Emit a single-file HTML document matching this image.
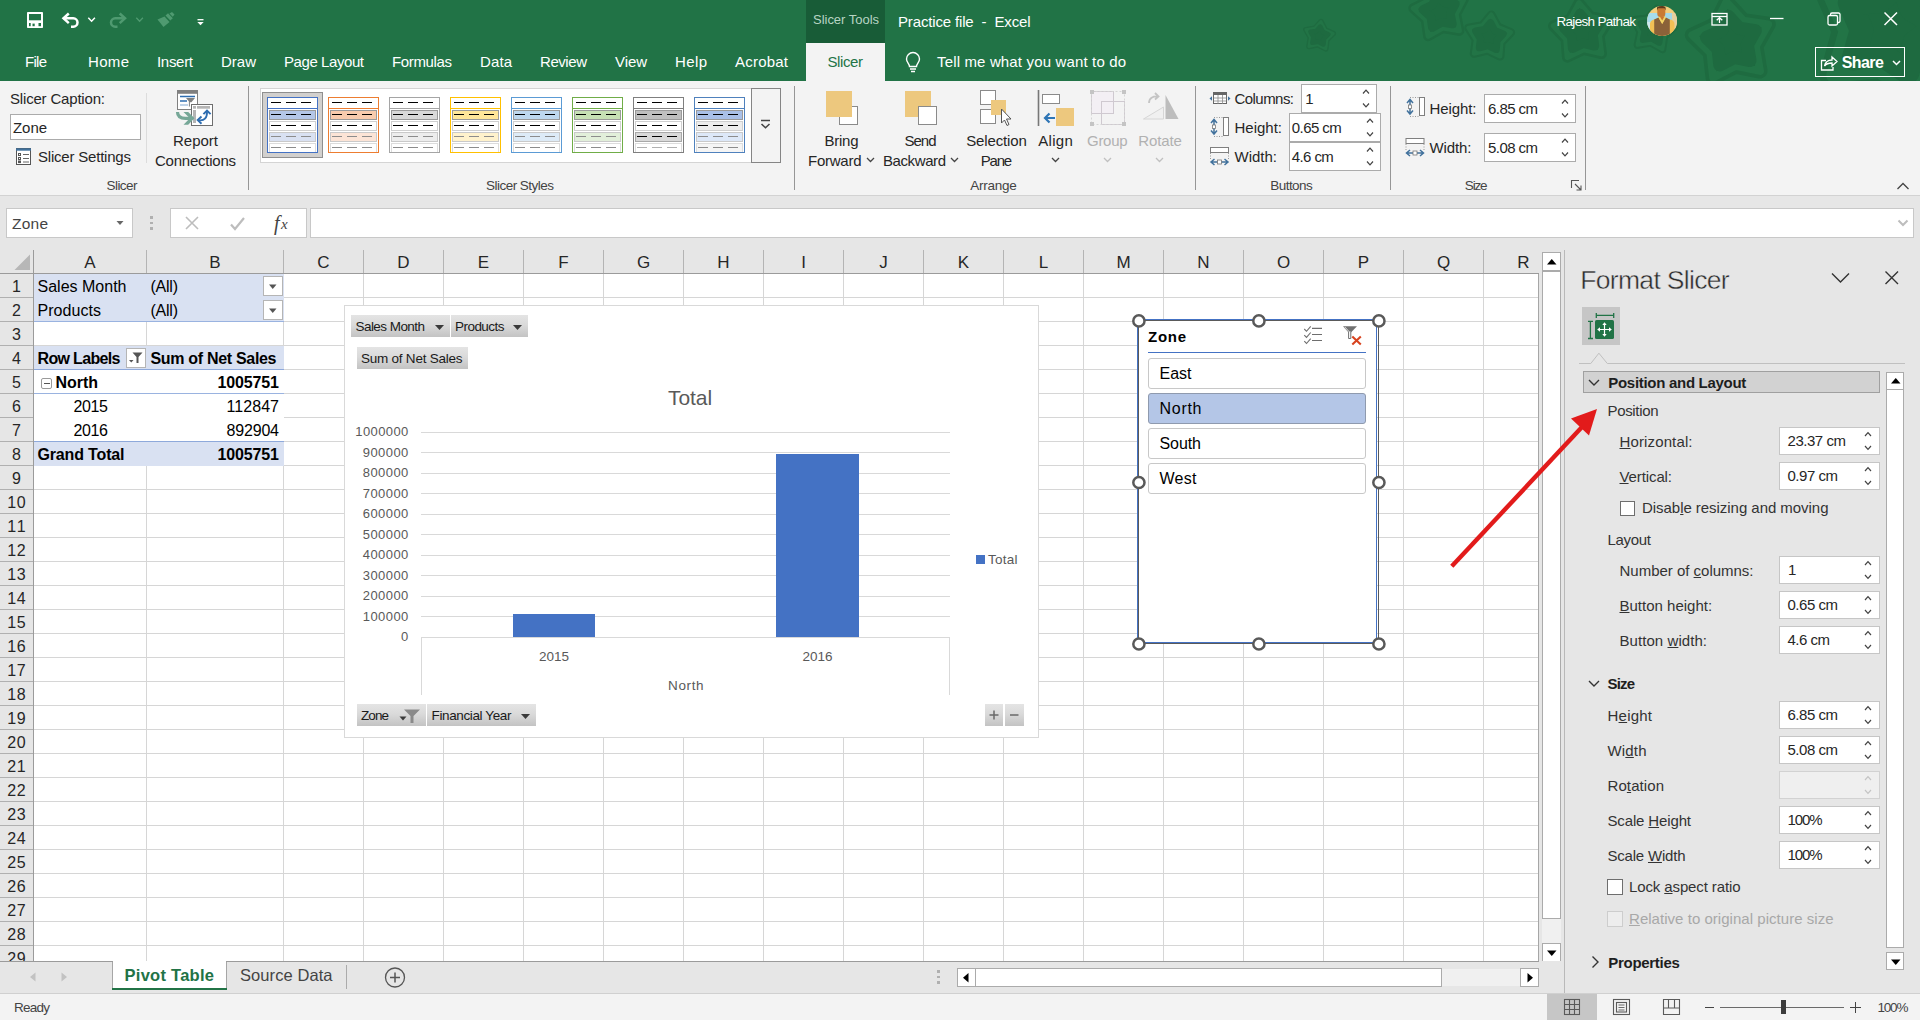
<!DOCTYPE html>
<html><head><meta charset="utf-8"><title>Practice file - Excel</title>
<style>
html,body{margin:0;padding:0;}
body{width:1920px;height:1020px;overflow:hidden;position:relative;background:#e6e6e6;font-family:"Liberation Sans",sans-serif;}
.t{position:absolute;white-space:pre;line-height:1;}
.r{position:absolute;box-sizing:border-box;}
svg.r{overflow:visible;}
u{text-decoration:underline;text-underline-offset:1px;}
</style></head><body>
<!-- p1 -->
<div class="r" style="left:0px;top:0px;width:1920px;height:81px;background:#217346;"></div>
<svg class="r" style="left:1200px;top:0;width:720px;height:81px;overflow:hidden" viewBox="1200 0 720 81"><polygon points="1321.0,21.6 1325.1,29.7 1333.3,33.5 1326.9,39.8 1325.8,48.9 1317.8,44.7 1308.9,46.5 1310.4,37.5 1305.9,29.6 1314.9,28.3" fill="none" stroke="#1e6b40" stroke-width="5.5" stroke-linejoin="round"/><polygon points="1321.0,21.6 1325.1,29.7 1333.3,33.5 1326.9,39.8 1325.8,48.9 1317.8,44.7 1308.9,46.5 1310.4,37.5 1305.9,29.6 1314.9,28.3" fill="none" stroke="#227446" stroke-width="2.9" stroke-linejoin="round"/><polygon points="1320.3,26.7 1322.9,32.0 1328.2,34.4 1324.0,38.5 1323.4,44.3 1318.2,41.6 1312.5,42.7 1313.5,37.0 1310.6,31.9 1316.4,31.0" fill="#1e6a40" stroke="#1e6a40" stroke-width="4.7" stroke-linejoin="round"/><polygon points="1435.3,-14.5 1447.1,-2.5 1463.7,-0.6 1456.0,14.2 1459.3,30.7 1442.8,27.9 1428.2,36.2 1425.8,19.6 1413.4,8.3 1428.4,0.8" fill="none" stroke="#1e6b40" stroke-width="10.1" stroke-linejoin="round"/><polygon points="1435.3,-14.5 1447.1,-2.5 1463.7,-0.6 1456.0,14.2 1459.3,30.7 1442.8,27.9 1428.2,36.2 1425.8,19.6 1413.4,8.3 1428.4,0.8" fill="none" stroke="#227446" stroke-width="5.3" stroke-linejoin="round"/><polygon points="1437.0,-5.0 1444.5,2.7 1455.3,3.9 1450.3,13.4 1452.4,24.0 1441.8,22.2 1432.4,27.5 1430.8,16.9 1422.9,9.6 1432.5,4.8" fill="#1e6a40" stroke="#1e6a40" stroke-width="8.6" stroke-linejoin="round"/><polygon points="1491.3,14.7 1498.0,27.0 1510.9,32.3 1501.3,42.5 1500.2,56.4 1487.6,50.4 1474.0,53.6 1475.9,39.8 1468.5,27.9 1482.3,25.4" fill="none" stroke="#1e6b40" stroke-width="8.4" stroke-linejoin="round"/><polygon points="1491.3,14.7 1498.0,27.0 1510.9,32.3 1501.3,42.5 1500.2,56.4 1487.6,50.4 1474.0,53.6 1475.9,39.8 1468.5,27.9 1482.3,25.4" fill="none" stroke="#227446" stroke-width="4.4" stroke-linejoin="round"/><polygon points="1490.5,22.7 1494.8,30.6 1503.1,34.0 1496.9,40.5 1496.2,49.5 1488.1,45.6 1479.4,47.7 1480.5,38.8 1475.8,31.1 1484.7,29.5" fill="#1e6a40" stroke="#1e6a40" stroke-width="7.2" stroke-linejoin="round"/><polygon points="1579.0,3.0 1590.7,16.9 1608.6,20.2 1599.1,35.6 1601.5,53.6 1583.8,49.4 1567.4,57.2 1566.0,39.1 1553.5,25.9 1570.3,19.0" fill="none" stroke="#1e6b40" stroke-width="10.9" stroke-linejoin="round"/><polygon points="1579.0,3.0 1590.7,16.9 1608.6,20.2 1599.1,35.6 1601.5,53.6 1583.8,49.4 1567.4,57.2 1566.0,39.1 1553.5,25.9 1570.3,19.0" fill="none" stroke="#227446" stroke-width="5.7" stroke-linejoin="round"/><polygon points="1580.0,13.4 1587.6,22.3 1599.1,24.4 1593.0,34.3 1594.5,45.9 1583.2,43.2 1572.6,48.2 1571.7,36.6 1563.7,28.1 1574.5,23.7" fill="#1e6a40" stroke="#1e6a40" stroke-width="9.4" stroke-linejoin="round"/><polygon points="1656.7,9.0 1662.2,21.1 1674.1,27.0 1664.3,36.0 1662.3,49.1 1650.8,42.6 1637.7,44.8 1640.4,31.8 1634.2,20.0 1647.4,18.5" fill="none" stroke="#1e6b40" stroke-width="8.0" stroke-linejoin="round"/><polygon points="1656.7,9.0 1662.2,21.1 1674.1,27.0 1664.3,36.0 1662.3,49.1 1650.8,42.6 1637.7,44.8 1640.4,31.8 1634.2,20.0 1647.4,18.5" fill="none" stroke="#227446" stroke-width="4.2" stroke-linejoin="round"/><polygon points="1655.4,16.5 1658.9,24.3 1666.5,28.1 1660.2,33.9 1659.0,42.3 1651.6,38.1 1643.2,39.5 1644.9,31.1 1640.9,23.6 1649.4,22.6" fill="#1e6a40" stroke="#1e6a40" stroke-width="6.8" stroke-linejoin="round"/><polygon points="1726.4,2.1 1743.4,20.6 1768.2,24.3 1755.8,46.2 1760.0,71.0 1735.4,66.0 1713.1,77.6 1710.3,52.6 1692.3,35.0 1715.2,24.6" fill="none" stroke="#1e6b40" stroke-width="15.1" stroke-linejoin="round"/><polygon points="1726.4,2.1 1743.4,20.6 1768.2,24.3 1755.8,46.2 1760.0,71.0 1735.4,66.0 1713.1,77.6 1710.3,52.6 1692.3,35.0 1715.2,24.6" fill="none" stroke="#227446" stroke-width="7.9" stroke-linejoin="round"/><polygon points="1728.4,16.3 1739.3,28.3 1755.3,30.6 1747.3,44.7 1750.0,60.6 1734.2,57.4 1719.8,64.9 1718.0,48.8 1706.5,37.5 1721.2,30.8" fill="#1e6a40" stroke="#1e6a40" stroke-width="13.0" stroke-linejoin="round"/><polygon points="1907.9,-43.7 1924.0,-0.5 1963.7,22.8 1927.6,51.5 1917.7,96.5 1879.3,71.0 1833.4,75.5 1845.8,31.1 1827.3,-11.2 1873.4,-13.1" fill="none" stroke="#1e6b40" stroke-width="27.7" stroke-linejoin="round"/><polygon points="1907.9,-43.7 1924.0,-0.5 1963.7,22.8 1927.6,51.5 1917.7,96.5 1879.3,71.0 1833.4,75.5 1845.8,31.1 1827.3,-11.2 1873.4,-13.1" fill="none" stroke="#227446" stroke-width="14.5" stroke-linejoin="round"/><polygon points="1901.5,-18.1 1911.8,9.7 1937.4,24.7 1914.2,43.1 1907.8,72.1 1883.1,55.7 1853.6,58.5 1861.6,30.0 1849.7,2.8 1879.3,1.6" fill="#1e6a40" stroke="#1e6a40" stroke-width="23.8" stroke-linejoin="round"/></svg>
<div class="r" style="left:806px;top:0px;width:79px;height:43px;background:#185c37;"></div>
<div class="r" style="left:806px;top:43px;width:79px;height:38px;background:#f3f3f3;"></div>
<span class="t" style="left:813.00px;top:13.00px;font-size:13px;color:#b7d4c3;letter-spacing:-0.021px;">Slicer Tools</span>
<span class="t" style="left:827.50px;top:54.00px;font-size:15px;color:#217346;letter-spacing:-0.401px;">Slicer</span>
<span class="t" style="left:898.00px;top:14.00px;font-size:15px;color:#fff;letter-spacing:-0.153px;">Practice file  -  Excel</span>
<span class="t" style="left:1556.50px;top:15.00px;font-size:13.5px;color:#fff;letter-spacing:-0.692px;">Rajesh Pathak</span>
<svg class="r" style="left:1647px;top:6px;width:30px;height:30px" viewBox="0 0 30 30"><defs><clipPath id="av"><circle cx="15.100" cy="14.900" r="15"/></clipPath></defs><g clip-path="url(#av)"><rect width="30" height="30" fill="#f4cd7c"/><rect x="0" y="7" width="12" height="14" fill="#a6dcec"/><rect x="17" y="7" width="10" height="12" fill="#a3d6e6"/><rect x="25" y="7" width="5" height="16" fill="#e6cfa0"/><rect x="0" y="16" width="4" height="12" fill="#cfe9ee"/><path d="M3 30v-12c0-3 3-4.500 6-5l3-1.500h6.500l3 1.500c3 .5 6 2 6 5v12z" fill="#f2c055"/><path d="M7.200 30v-16.500l4.300-2 3.700 6.500 3.600-6.500 4 2v16.500z" fill="#8b6239"/><path d="M11.300 11.200l3.900 6.800 3.800-6.800-1.500-1h-4.700z" fill="#f3d467"/><path d="M12.800 10.500l2.400 4 2.300-4z" fill="#c9762f"/><rect x="10.300" y="0.300" width="8" height="10.700" rx="3.200" fill="#c97a33"/><path d="M10 4.500v-2.500c0-1.500 1.500-2 4.300-2s4.300.5 4.300 2v2.500l-1-2.300h-6.600z" fill="#5d3a1c"/></g></svg>
<svg class="r" style="left:0;top:0;width:230px;height:40px" viewBox="0 0 230 40" fill="none" stroke="#fff" stroke-width="1.6"><rect x="27" y="12" width="16" height="16" rx="0.8" fill="#fff" stroke="none"/><rect x="29" y="14" width="12" height="6.300" fill="#217346" stroke="none"/><rect x="29" y="23" width="1.700" height="3.200" fill="#217346" stroke="none"/><rect x="38.500" y="23" width="2.500" height="3.200" fill="#217346" stroke="none"/><rect x="32.500" y="23.600" width="2.200" height="2.600" fill="#217346" stroke="none"/><path d="M63.500 18.300h9.800a4.200 4.200 0 0 1 0 8.400h-2.300" stroke-width="2.500"/><path d="M68.800 13.500l-5.300 4.800 5.300 4.800" stroke-width="2.500"/><path d="M88.300 17.800l3.300 3.400 3.300-3.400" stroke-width="1.500"/><g stroke="#4f9a70"><path d="M125 18.300h-9.800a4.200 4.200 0 0 0 0 8.400h2.300" stroke-width="2.500"/><path d="M119.700 13.500l5.300 4.800-5.300 4.800" stroke-width="2.500"/><path d="M136.300 17.800l3.300 3.400 3.300-3.400" stroke-width="1.300"/></g><g fill="#4f9a70" stroke="none"><path d="M157.500 19.500l7-3 5 5.500-6 5z"/><path d="M165.500 15.500l2.500-2.300 4.800 5-2.500 2.300z"/><path d="M169.500 13.500l2.500-1.500 2.500 2.500-1.800 2.200z"/></g><path d="M197.500 19.700h6" stroke-width="1.300"/><path d="M197.300 22h6.400l-3.200 3.300z" fill="#fff" stroke="none"/></svg>
<svg class="r" style="left:1700px;top:0;width:220px;height:40px" viewBox="1700 0 220 40" fill="none" stroke="#fff" stroke-width="1.3"><rect x="1712" y="13.5" width="15" height="11.5"/><path d="M1712 16.5h15"/><path d="M1719.5 23v-5m-2.8 2.3l2.8-2.6 2.8 2.6"/><path d="M1770 18.5h13.5"/><rect x="1828" y="15.5" width="9.5" height="9.5" rx="1.5"/><path d="M1830.5 15.5v-1a1.5 1.5 0 0 1 1.5-1.5h6.5a1.5 1.5 0 0 1 1.5 1.5v6.500a1.5 1.5 0 0 1-1.5 1.5h-1"/><path d="M1884.500 12.500l12.500 12.500m0-12.500l-12.500 12.500" stroke-width="1.5"/></svg>
<span class="t" style="left:25.00px;top:54.00px;font-size:15px;color:#fff;letter-spacing:-0.723px;">File</span>
<span class="t" style="left:88.00px;top:54.00px;font-size:15px;color:#fff;letter-spacing:0.330px;">Home</span>
<span class="t" style="left:157.00px;top:54.00px;font-size:15px;color:#fff;letter-spacing:-0.302px;">Insert</span>
<span class="t" style="left:221.00px;top:54.00px;font-size:15px;color:#fff;">Draw</span>
<span class="t" style="left:284.00px;top:54.00px;font-size:15px;color:#fff;letter-spacing:-0.423px;">Page Layout</span>
<span class="t" style="left:392.00px;top:54.00px;font-size:15px;color:#fff;letter-spacing:-0.358px;">Formulas</span>
<span class="t" style="left:480.00px;top:54.00px;font-size:15px;color:#fff;letter-spacing:0.106px;">Data</span>
<span class="t" style="left:540.00px;top:54.00px;font-size:15px;color:#fff;letter-spacing:-0.436px;">Review</span>
<span class="t" style="left:615.00px;top:54.00px;font-size:15px;color:#fff;letter-spacing:-0.080px;">View</span>
<span class="t" style="left:675.00px;top:54.00px;font-size:15px;color:#fff;letter-spacing:0.384px;">Help</span>
<span class="t" style="left:735.00px;top:54.00px;font-size:15px;color:#fff;letter-spacing:0.218px;">Acrobat</span>
<span class="t" style="left:937.00px;top:54.00px;font-size:15px;color:#fff;letter-spacing:0.151px;">Tell me what you want to do</span>
<svg class="r" style="left:900px;top:48px;width:28px;height:28px" viewBox="900 48 28 28" fill="none" stroke="#fff" stroke-width="1.4"><path d="M909.500 66.500c0-3-3-4-3-7.500a6.500 6.500 0 0 1 13 0c0 3.500-3 4.500-3 7.500z"/><path d="M910 69h6M911 71.500h4"/></svg>
<div class="r" style="left:1815px;top:47px;width:90px;height:30px;border:1px solid #fff;"></div>
<span class="t" style="left:1841.70px;top:55.00px;font-size:16px;color:#fff;letter-spacing:-0.567px;font-weight:bold;">Share</span>
<svg class="r" style="left:1815px;top:47px;width:90px;height:30px" viewBox="1815 47 90 30" fill="none" stroke="#fff" stroke-width="1.3"><path d="M1826 60.500h-4.500v9.500h11.500v-3"/><path d="M1824.500 66c1-4.500 4-6 7.500-6v-3l5 4.500-5 4.500v-3c-3 0-5.500 0.500-7.500 3z"/><path d="M1893 61l3.500 3.500 3.500-3.500" stroke-width="1.5"/></svg>
<!-- p2 -->
<div class="r" style="left:0px;top:81px;width:1920px;height:114px;background:#f3f3f3;"></div>
<div class="r" style="left:0px;top:195px;width:1920px;height:1px;background:#d2d2d2;"></div>
<div class="r" style="left:248px;top:86px;width:1px;height:104px;background:#969696;"></div>
<div class="r" style="left:794px;top:86px;width:1px;height:104px;background:#969696;"></div>
<div class="r" style="left:1195px;top:86px;width:1px;height:104px;background:#969696;"></div>
<div class="r" style="left:1390px;top:86px;width:1px;height:104px;background:#969696;"></div>
<div class="r" style="left:1585px;top:86px;width:1px;height:104px;background:#969696;"></div>
<div class="r" style="left:146px;top:93px;width:1px;height:70px;background:#dcdcdc;"></div>
<span class="t" style="left:10.00px;top:91.00px;font-size:15px;color:#262626;letter-spacing:-0.181px;">Slicer Caption:</span>
<div class="r" style="left:10px;top:114px;width:131px;height:26px;background:#fff;border:1px solid #ababab;"></div>
<span class="t" style="left:13.00px;top:120.00px;font-size:15px;color:#262626;letter-spacing:-0.062px;">Zone</span>
<span class="t" style="left:38.00px;top:149.00px;font-size:15px;color:#262626;letter-spacing:-0.205px;">Slicer Settings</span>
<svg class="r" style="left:15px;top:146px;width:18px;height:20px" viewBox="15 146 18 20" fill="none" stroke="#555" stroke-width="1"><rect x="16.500" y="148.500" width="14" height="16" fill="#fff"/><path d="M16 149.500h15" stroke="#41719c" stroke-width="2.4"/><path d="M23 154.500h6M23 158.500h6M23 162h6" stroke="#666"/><rect x="18.500" y="153.500" width="2" height="2" /><rect x="18.500" y="157.500" width="2" height="2"/><rect x="18.500" y="161" width="2" height="1.6"/></svg>
<span class="t" style="left:106.50px;top:179.00px;font-size:13.5px;color:#444;letter-spacing:-0.551px;">Slicer</span>
<span class="t" style="left:173.00px;top:133.00px;font-size:15px;color:#262626;">Report</span>
<span class="t" style="left:155.00px;top:153.00px;font-size:15px;color:#262626;letter-spacing:-0.238px;">Connections</span>
<svg class="r" style="left:174px;top:88px;width:42px;height:40px" viewBox="174 88 42 40" fill="none"><rect x="177.500" y="90.500" width="20" height="19" fill="#fff" stroke="#808080"/><rect x="177" y="90" width="21" height="3.800" fill="#808080"/><path d="M180 96.500h15M180 101h7" stroke="#2e6db0" stroke-width="1.700"/><path d="M180 105h8" stroke="#b4cbe4" stroke-width="1.700"/><path d="M186 98h9l-3.600 4.300h-1.800z" fill="#808080"/><path d="M189.400 101v5.500" stroke="#808080" stroke-width="1"/><rect x="191.500" y="104.500" width="21" height="21" fill="#fff" stroke="#6e6e6e"/><rect x="193" y="106" width="3" height="2.700" fill="#b5b5b5"/><rect x="197" y="106" width="13" height="2.700" fill="#b5b5b5"/><rect x="193" y="110" width="3" height="13" fill="#b5b5b5"/><path d="M177.500 112c0 4.500 3.500 6.300 8 6.300h6" stroke="#76a797" stroke-width="3.200"/><path d="M183.500 112h4.700l6.300 6.300-6.300 6.400h-4.700l6.300-6.400z" fill="#76a797"/><path d="M199 120.200c5 .8 8.200-2 8-8.500" stroke="#2e6db0" stroke-width="1.900"/><path d="M201.500 116.500l-3.800 3.600 3.800 3.600M203.400 114.200l3.600-3.700 3.600 3.700" stroke="#2e6db0" stroke-width="1.900"/></svg>
<div class="r" style="left:260px;top:88px;width:492px;height:75px;background:#fff;border:1px solid #d4d4d4;"></div>
<div class="r" style="left:751px;top:88px;width:30px;height:75px;background:#f3f3f3;border:1px solid #858585;"></div>
<svg class="r" style="left:758px;top:118px;width:16px;height:14px" viewBox="758 118 16 14" fill="none" stroke="#444" stroke-width="1.2"><path d="M761 120.500h9M761.500 124l4 3.800 4-3.800" stroke-width="1.500"/></svg>
<div class="r" style="left:262px;top:92px;width:61px;height:66px;background:#d2d0ce;border:1px solid #8f8f8f;"></div>
<svg class="r" style="left:260px;top:88px;width:492px;height:75px" viewBox="260 88 492 75" shape-rendering="crispEdges"><rect x="267" y="97" width="51" height="56" fill="#4472c4"/><rect x="268" y="98" width="49" height="54" fill="#fff"/><rect x="267" y="108" width="51" height="1" fill="#4472c4"/><rect x="269" y="110" width="47" height="10" fill="#9a9a9a"/><rect x="270" y="111" width="45" height="8" fill="#b4c6e7"/><rect x="271" y="114" width="10" height="1" fill="#000"/><rect x="286" y="114" width="10" height="1" fill="#000"/><rect x="301" y="114" width="10" height="1" fill="#000"/><rect x="269" y="121" width="47" height="10" fill="#cfcfcf"/><rect x="270" y="122" width="45" height="8" fill="#fff"/><rect x="271" y="125" width="10" height="1" fill="#000"/><rect x="286" y="125" width="10" height="1" fill="#000"/><rect x="301" y="125" width="10" height="1" fill="#000"/><rect x="269" y="132" width="47" height="10" fill="#c9c9c9"/><rect x="270" y="133" width="45" height="8" fill="#d9e1f2"/><rect x="271" y="136" width="10" height="1" fill="#8c8c8c"/><rect x="286" y="136" width="10" height="1" fill="#8c8c8c"/><rect x="301" y="136" width="10" height="1" fill="#8c8c8c"/><rect x="269" y="143" width="47" height="10" fill="#dcdcdc"/><rect x="270" y="144" width="45" height="8" fill="#fff"/><rect x="271" y="147" width="10" height="1" fill="#8c8c8c"/><rect x="286" y="147" width="10" height="1" fill="#8c8c8c"/><rect x="301" y="147" width="10" height="1" fill="#8c8c8c"/><rect x="271" y="102" width="10" height="1" fill="#000"/><rect x="286" y="102" width="10" height="1" fill="#000"/><rect x="301" y="102" width="10" height="1" fill="#000"/><rect x="267" y="152" width="51" height="1" fill="#4472c4"/><rect x="328" y="97" width="51" height="56" fill="#ed7d31"/><rect x="329" y="98" width="49" height="54" fill="#fff"/><rect x="328" y="108" width="51" height="1" fill="#ed7d31"/><rect x="330" y="110" width="47" height="10" fill="#9a9a9a"/><rect x="331" y="111" width="45" height="8" fill="#f8cbad"/><rect x="332" y="114" width="10" height="1" fill="#000"/><rect x="347" y="114" width="10" height="1" fill="#000"/><rect x="362" y="114" width="10" height="1" fill="#000"/><rect x="330" y="121" width="47" height="10" fill="#cfcfcf"/><rect x="331" y="122" width="45" height="8" fill="#fff"/><rect x="332" y="125" width="10" height="1" fill="#000"/><rect x="347" y="125" width="10" height="1" fill="#000"/><rect x="362" y="125" width="10" height="1" fill="#000"/><rect x="330" y="132" width="47" height="10" fill="#c9c9c9"/><rect x="331" y="133" width="45" height="8" fill="#fce4d6"/><rect x="332" y="136" width="10" height="1" fill="#8c8c8c"/><rect x="347" y="136" width="10" height="1" fill="#8c8c8c"/><rect x="362" y="136" width="10" height="1" fill="#8c8c8c"/><rect x="330" y="143" width="47" height="10" fill="#dcdcdc"/><rect x="331" y="144" width="45" height="8" fill="#fff"/><rect x="332" y="147" width="10" height="1" fill="#8c8c8c"/><rect x="347" y="147" width="10" height="1" fill="#8c8c8c"/><rect x="362" y="147" width="10" height="1" fill="#8c8c8c"/><rect x="332" y="102" width="10" height="1" fill="#000"/><rect x="347" y="102" width="10" height="1" fill="#000"/><rect x="362" y="102" width="10" height="1" fill="#000"/><rect x="328" y="152" width="51" height="1" fill="#ed7d31"/><rect x="389" y="97" width="51" height="56" fill="#a5a5a5"/><rect x="390" y="98" width="49" height="54" fill="#fff"/><rect x="389" y="108" width="51" height="1" fill="#a5a5a5"/><rect x="391" y="110" width="47" height="10" fill="#9a9a9a"/><rect x="392" y="111" width="45" height="8" fill="#d9d9d9"/><rect x="393" y="114" width="10" height="1" fill="#000"/><rect x="408" y="114" width="10" height="1" fill="#000"/><rect x="423" y="114" width="10" height="1" fill="#000"/><rect x="391" y="121" width="47" height="10" fill="#cfcfcf"/><rect x="392" y="122" width="45" height="8" fill="#fff"/><rect x="393" y="125" width="10" height="1" fill="#000"/><rect x="408" y="125" width="10" height="1" fill="#000"/><rect x="423" y="125" width="10" height="1" fill="#000"/><rect x="391" y="132" width="47" height="10" fill="#c9c9c9"/><rect x="392" y="133" width="45" height="8" fill="#ededed"/><rect x="393" y="136" width="10" height="1" fill="#8c8c8c"/><rect x="408" y="136" width="10" height="1" fill="#8c8c8c"/><rect x="423" y="136" width="10" height="1" fill="#8c8c8c"/><rect x="391" y="143" width="47" height="10" fill="#dcdcdc"/><rect x="392" y="144" width="45" height="8" fill="#fff"/><rect x="393" y="147" width="10" height="1" fill="#8c8c8c"/><rect x="408" y="147" width="10" height="1" fill="#8c8c8c"/><rect x="423" y="147" width="10" height="1" fill="#8c8c8c"/><rect x="393" y="102" width="10" height="1" fill="#000"/><rect x="408" y="102" width="10" height="1" fill="#000"/><rect x="423" y="102" width="10" height="1" fill="#000"/><rect x="389" y="152" width="51" height="1" fill="#a5a5a5"/><rect x="450" y="97" width="51" height="56" fill="#ffc000"/><rect x="451" y="98" width="49" height="54" fill="#fff"/><rect x="450" y="108" width="51" height="1" fill="#ffc000"/><rect x="452" y="110" width="47" height="10" fill="#9a9a9a"/><rect x="453" y="111" width="45" height="8" fill="#ffe699"/><rect x="454" y="114" width="10" height="1" fill="#000"/><rect x="469" y="114" width="10" height="1" fill="#000"/><rect x="484" y="114" width="10" height="1" fill="#000"/><rect x="452" y="121" width="47" height="10" fill="#cfcfcf"/><rect x="453" y="122" width="45" height="8" fill="#fff"/><rect x="454" y="125" width="10" height="1" fill="#000"/><rect x="469" y="125" width="10" height="1" fill="#000"/><rect x="484" y="125" width="10" height="1" fill="#000"/><rect x="452" y="132" width="47" height="10" fill="#c9c9c9"/><rect x="453" y="133" width="45" height="8" fill="#fff2cc"/><rect x="454" y="136" width="10" height="1" fill="#8c8c8c"/><rect x="469" y="136" width="10" height="1" fill="#8c8c8c"/><rect x="484" y="136" width="10" height="1" fill="#8c8c8c"/><rect x="452" y="143" width="47" height="10" fill="#dcdcdc"/><rect x="453" y="144" width="45" height="8" fill="#fff"/><rect x="454" y="147" width="10" height="1" fill="#8c8c8c"/><rect x="469" y="147" width="10" height="1" fill="#8c8c8c"/><rect x="484" y="147" width="10" height="1" fill="#8c8c8c"/><rect x="454" y="102" width="10" height="1" fill="#000"/><rect x="469" y="102" width="10" height="1" fill="#000"/><rect x="484" y="102" width="10" height="1" fill="#000"/><rect x="450" y="152" width="51" height="1" fill="#ffc000"/><rect x="511" y="97" width="51" height="56" fill="#5b9bd5"/><rect x="512" y="98" width="49" height="54" fill="#fff"/><rect x="511" y="108" width="51" height="1" fill="#5b9bd5"/><rect x="513" y="110" width="47" height="10" fill="#9a9a9a"/><rect x="514" y="111" width="45" height="8" fill="#bdd7ee"/><rect x="515" y="114" width="10" height="1" fill="#000"/><rect x="530" y="114" width="10" height="1" fill="#000"/><rect x="545" y="114" width="10" height="1" fill="#000"/><rect x="513" y="121" width="47" height="10" fill="#cfcfcf"/><rect x="514" y="122" width="45" height="8" fill="#fff"/><rect x="515" y="125" width="10" height="1" fill="#000"/><rect x="530" y="125" width="10" height="1" fill="#000"/><rect x="545" y="125" width="10" height="1" fill="#000"/><rect x="513" y="132" width="47" height="10" fill="#c9c9c9"/><rect x="514" y="133" width="45" height="8" fill="#ddebf7"/><rect x="515" y="136" width="10" height="1" fill="#8c8c8c"/><rect x="530" y="136" width="10" height="1" fill="#8c8c8c"/><rect x="545" y="136" width="10" height="1" fill="#8c8c8c"/><rect x="513" y="143" width="47" height="10" fill="#dcdcdc"/><rect x="514" y="144" width="45" height="8" fill="#fff"/><rect x="515" y="147" width="10" height="1" fill="#8c8c8c"/><rect x="530" y="147" width="10" height="1" fill="#8c8c8c"/><rect x="545" y="147" width="10" height="1" fill="#8c8c8c"/><rect x="515" y="102" width="10" height="1" fill="#000"/><rect x="530" y="102" width="10" height="1" fill="#000"/><rect x="545" y="102" width="10" height="1" fill="#000"/><rect x="511" y="152" width="51" height="1" fill="#5b9bd5"/><rect x="572" y="97" width="51" height="56" fill="#70ad47"/><rect x="573" y="98" width="49" height="54" fill="#fff"/><rect x="572" y="108" width="51" height="1" fill="#70ad47"/><rect x="574" y="110" width="47" height="10" fill="#9a9a9a"/><rect x="575" y="111" width="45" height="8" fill="#c6e0b4"/><rect x="576" y="114" width="10" height="1" fill="#000"/><rect x="591" y="114" width="10" height="1" fill="#000"/><rect x="606" y="114" width="10" height="1" fill="#000"/><rect x="574" y="121" width="47" height="10" fill="#cfcfcf"/><rect x="575" y="122" width="45" height="8" fill="#fff"/><rect x="576" y="125" width="10" height="1" fill="#000"/><rect x="591" y="125" width="10" height="1" fill="#000"/><rect x="606" y="125" width="10" height="1" fill="#000"/><rect x="574" y="132" width="47" height="10" fill="#c9c9c9"/><rect x="575" y="133" width="45" height="8" fill="#e2efda"/><rect x="576" y="136" width="10" height="1" fill="#8c8c8c"/><rect x="591" y="136" width="10" height="1" fill="#8c8c8c"/><rect x="606" y="136" width="10" height="1" fill="#8c8c8c"/><rect x="574" y="143" width="47" height="10" fill="#dcdcdc"/><rect x="575" y="144" width="45" height="8" fill="#fff"/><rect x="576" y="147" width="10" height="1" fill="#8c8c8c"/><rect x="591" y="147" width="10" height="1" fill="#8c8c8c"/><rect x="606" y="147" width="10" height="1" fill="#8c8c8c"/><rect x="576" y="102" width="10" height="1" fill="#000"/><rect x="591" y="102" width="10" height="1" fill="#000"/><rect x="606" y="102" width="10" height="1" fill="#000"/><rect x="572" y="152" width="51" height="1" fill="#70ad47"/><rect x="633" y="97" width="51" height="56" fill="#7f7f7f"/><rect x="634" y="98" width="49" height="54" fill="#fff"/><rect x="633" y="108" width="51" height="1" fill="#7f7f7f"/><rect x="635" y="110" width="47" height="10" fill="#9a9a9a"/><rect x="636" y="111" width="45" height="8" fill="#bfbfbf"/><rect x="637" y="114" width="10" height="1" fill="#000"/><rect x="652" y="114" width="10" height="1" fill="#000"/><rect x="667" y="114" width="10" height="1" fill="#000"/><rect x="635" y="121" width="47" height="10" fill="#cfcfcf"/><rect x="636" y="122" width="45" height="8" fill="#fff"/><rect x="637" y="125" width="10" height="1" fill="#000"/><rect x="652" y="125" width="10" height="1" fill="#000"/><rect x="667" y="125" width="10" height="1" fill="#000"/><rect x="635" y="132" width="47" height="10" fill="#a8a8a8"/><rect x="636" y="133" width="45" height="8" fill="#d9d9d9"/><rect x="637" y="136" width="10" height="1" fill="#000"/><rect x="652" y="136" width="10" height="1" fill="#000"/><rect x="667" y="136" width="10" height="1" fill="#000"/><rect x="635" y="143" width="47" height="10" fill="#dcdcdc"/><rect x="636" y="144" width="45" height="8" fill="#fff"/><rect x="637" y="147" width="10" height="1" fill="#b0b0b0"/><rect x="652" y="147" width="10" height="1" fill="#b0b0b0"/><rect x="667" y="147" width="10" height="1" fill="#b0b0b0"/><rect x="637" y="102" width="10" height="1" fill="#000"/><rect x="652" y="102" width="10" height="1" fill="#000"/><rect x="667" y="102" width="10" height="1" fill="#000"/><rect x="633" y="152" width="51" height="1" fill="#7f7f7f"/><rect x="694" y="97" width="51" height="56" fill="#4f81bd"/><rect x="695" y="98" width="49" height="54" fill="#fff"/><rect x="694" y="108" width="51" height="1" fill="#4f81bd"/><rect x="696" y="110" width="47" height="10" fill="#9a9a9a"/><rect x="697" y="111" width="45" height="8" fill="#a9c0e8"/><rect x="698" y="114" width="10" height="1" fill="#000"/><rect x="713" y="114" width="10" height="1" fill="#000"/><rect x="728" y="114" width="10" height="1" fill="#000"/><rect x="696" y="121" width="47" height="10" fill="#cfcfcf"/><rect x="697" y="122" width="45" height="8" fill="#ededed"/><rect x="698" y="125" width="10" height="1" fill="#000"/><rect x="713" y="125" width="10" height="1" fill="#000"/><rect x="728" y="125" width="10" height="1" fill="#000"/><rect x="696" y="132" width="47" height="10" fill="#c9c9c9"/><rect x="697" y="133" width="45" height="8" fill="#dde8f8"/><rect x="698" y="136" width="10" height="1" fill="#8c8c8c"/><rect x="713" y="136" width="10" height="1" fill="#8c8c8c"/><rect x="728" y="136" width="10" height="1" fill="#8c8c8c"/><rect x="696" y="143" width="47" height="10" fill="#dcdcdc"/><rect x="697" y="144" width="45" height="8" fill="#f5f5f5"/><rect x="698" y="147" width="10" height="1" fill="#8c8c8c"/><rect x="713" y="147" width="10" height="1" fill="#8c8c8c"/><rect x="728" y="147" width="10" height="1" fill="#8c8c8c"/><rect x="698" y="102" width="10" height="1" fill="#000"/><rect x="713" y="102" width="10" height="1" fill="#000"/><rect x="728" y="102" width="10" height="1" fill="#000"/><rect x="694" y="152" width="51" height="1" fill="#4f81bd"/></svg>
<span class="t" style="left:486.00px;top:179.00px;font-size:13.5px;color:#444;letter-spacing:-0.522px;">Slicer Styles</span>
<svg class="r" style="left:800px;top:86px;width:390px;height:45px" viewBox="800 86 390 45" fill="none"><rect x="839.500" y="106.500" width="18" height="18" fill="#fff" stroke="#8a8a8a"/><rect x="826" y="91" width="26" height="26" fill="#edc87e"/><rect x="905" y="91" width="26" height="26" fill="#edc87e"/><rect x="918.500" y="106.500" width="18" height="18" fill="#fff" stroke="#8a8a8a"/><rect x="980.500" y="90.500" width="15" height="14" fill="#fff" stroke="#8a8a8a"/><rect x="980.500" y="109.500" width="15" height="14" fill="#fff" stroke="#8a8a8a"/><rect x="991" y="100" width="15" height="15" fill="#edc87e"/><path d="M1001.500 109v14l3-3 2.500 5.500 2-1-2.500-5.500h4.500z" fill="#fff" stroke="#555" stroke-width="1"/><path d="M1038.500 90v36" stroke="#777" stroke-width="1.6"/><rect x="1042.500" y="94.500" width="17" height="9" fill="#fff" stroke="#8a8a8a"/><rect x="1056" y="108" width="18" height="18" fill="#edc87e"/><path d="M1055 118h-10m4.500-4.500l-4.500 4.500 4.500 4.500" stroke="#2e75b6" stroke-width="2.200"/><g stroke="#cfc9d0"><rect x="1091.500" y="91.500" width="22" height="22" fill="#f3eff4"/><rect x="1101.500" y="101.500" width="23" height="23" fill="none"/><rect x="1091.500" y="91.500" width="33" height="33" fill="none" stroke-dasharray="2 2" stroke="#d5d5d5"/></g><g fill="#c4c4c4"><rect x="1090" y="90" width="4" height="4"/><rect x="1122" y="90" width="4" height="4"/><rect x="1090" y="122" width="4" height="4"/><rect x="1122" y="122" width="4" height="4"/></g><path d="M1165.500 95v24h13z" fill="#bdbdbd"/><path d="M1163.500 107v12h-20z" fill="#f0f0f0" stroke="#d6d6d6"/><path d="M1149 103c0-5 4-7 9-6.500m-3-3.500l3.500 3.500-3.500 3" stroke="#c4c4c4" stroke-width="1.800"/></svg>
<span class="t" style="left:824.50px;top:133.00px;font-size:15px;color:#262626;letter-spacing:-0.254px;">Bring</span>
<span class="t" style="left:808.00px;top:153.00px;font-size:15px;color:#262626;letter-spacing:-0.251px;">Forward</span>
<svg class="r" style="left:865.5px;top:156.75px;width:9px;height:5.5px" viewBox="-4.5 -2.75 9 5.5" fill="none" stroke="#444" stroke-width="1.3"><path d="M-3.5 -1.75L0 1.75L3.5 -1.75"/></svg>
<span class="t" style="left:904.50px;top:133.00px;font-size:15px;color:#262626;letter-spacing:-1.010px;">Send</span>
<span class="t" style="left:883.00px;top:153.00px;font-size:15px;color:#262626;letter-spacing:-0.408px;">Backward</span>
<svg class="r" style="left:949.5px;top:156.75px;width:9px;height:5.5px" viewBox="-4.5 -2.75 9 5.5" fill="none" stroke="#444" stroke-width="1.3"><path d="M-3.5 -1.75L0 1.75L3.5 -1.75"/></svg>
<span class="t" style="left:966.25px;top:133.00px;font-size:15px;color:#262626;letter-spacing:-0.150px;">Selection</span>
<span class="t" style="left:980.79px;top:153.00px;font-size:15px;color:#262626;letter-spacing:-1.200px;">Pane</span>
<span class="t" style="left:1038.25px;top:133.00px;font-size:15px;color:#262626;letter-spacing:0.287px;">Align</span>
<svg class="r" style="left:1051.0px;top:156.75px;width:9px;height:5.5px" viewBox="-4.5 -2.75 9 5.5" fill="none" stroke="#444" stroke-width="1.3"><path d="M-3.5 -1.75L0 1.75L3.5 -1.75"/></svg>
<span class="t" style="left:1087.05px;top:133.00px;font-size:15px;color:#b1b1b1;letter-spacing:-0.296px;">Group</span>
<svg class="r" style="left:1102.5px;top:156.75px;width:9px;height:5.5px" viewBox="-4.5 -2.75 9 5.5" fill="none" stroke="#c0c0c0" stroke-width="1.3"><path d="M-3.5 -1.75L0 1.75L3.5 -1.75"/></svg>
<span class="t" style="left:1138.25px;top:133.00px;font-size:15px;color:#b1b1b1;letter-spacing:-0.138px;">Rotate</span>
<svg class="r" style="left:1155.0px;top:156.75px;width:9px;height:5.5px" viewBox="-4.5 -2.75 9 5.5" fill="none" stroke="#c0c0c0" stroke-width="1.3"><path d="M-3.5 -1.75L0 1.75L3.5 -1.75"/></svg>
<span class="t" style="left:970.25px;top:179.00px;font-size:13.5px;color:#444;letter-spacing:-0.254px;">Arrange</span>
<span class="t" style="left:1234.50px;top:91.00px;font-size:15px;color:#262626;letter-spacing:-0.550px;">Columns:</span>
<span class="t" style="left:1234.50px;top:120.00px;font-size:15px;color:#262626;">Height:</span>
<span class="t" style="left:1234.50px;top:149.00px;font-size:15px;color:#262626;">Width:</span>
<div class="r" style="left:1301px;top:84px;width:76px;height:29px;background:#fff;border:1px solid #ababab;"></div><span class="t" style="left:1305.30px;top:91.00px;font-size:15px;color:#262626;">1</span><svg class="r" style="left:1360.5px;top:84px;width:10px;height:29px" viewBox="-5 0 10 29" fill="none" stroke="#444" stroke-width="1.2"><path d="M-3 9.5l3-3.300 3 3.300M-3 19.5l3 3.300 3-3.300"/></svg>
<div class="r" style="left:1289px;top:113px;width:92px;height:29px;background:#fff;border:1px solid #ababab;"></div><span class="t" style="left:1291.80px;top:120.00px;font-size:15px;color:#262626;letter-spacing:-0.559px;">0.65 cm</span><svg class="r" style="left:1364.5px;top:113px;width:10px;height:29px" viewBox="-5 0 10 29" fill="none" stroke="#444" stroke-width="1.2"><path d="M-3 9.5l3-3.300 3 3.300M-3 19.5l3 3.300 3-3.300"/></svg>
<div class="r" style="left:1289px;top:142px;width:92px;height:29px;background:#fff;border:1px solid #ababab;"></div><span class="t" style="left:1291.80px;top:149.00px;font-size:15px;color:#262626;letter-spacing:-0.602px;">4.6 cm</span><svg class="r" style="left:1364.5px;top:142px;width:10px;height:29px" viewBox="-5 0 10 29" fill="none" stroke="#444" stroke-width="1.2"><path d="M-3 9.5l3-3.300 3 3.300M-3 19.5l3 3.300 3-3.300"/></svg>
<span class="t" style="left:1270.25px;top:179.00px;font-size:13.5px;color:#444;letter-spacing:-0.546px;">Buttons</span>
<svg class="r" style="left:1205px;top:84px;width:230px;height:90px" viewBox="1205 84 230 90" fill="none"><rect x="1213.500" y="92.500" width="13" height="11" fill="#fff" stroke="#666"/><path d="M1213 94h14" stroke="#666" stroke-width="2"/><path d="M1213.500 98h13M1213.500 101h13M1218 95v9M1222.500 95v9" stroke="#8a8a8a" stroke-width=".8"/><path d="M1209.500 98.500l2.500-2.300v4.600zM1230.500 98.500l-2.500-2.300v4.600z" fill="#41719c"/><path d="M1214 120v13M1211 123l3-3.500 3 3.500M1211 130.5l3 3.500 3-3.500" stroke="#41719c" stroke-width="1.500" fill="none"/><rect x="1212.5" y="125" width="3" height="3.500" fill="#fff" stroke="#777" stroke-width=".8"/><rect x="1223.5" y="117.5" width="5" height="18" fill="#fff" stroke="#7f7f7f"/><path d="M1214 136.5h9M1214 117.5h9" stroke="#999" stroke-width="1" stroke-dasharray="1 1.500"/><rect x="1210.5" y="147.5" width="18" height="5" fill="#fff" stroke="#7f7f7f"/><path d="M1211 162h17M1214.5 159l-3.500 3 3.500 3M1224.5 159l3.500 3-3.500 3" stroke="#41719c" stroke-width="1.500" fill="none"/><rect x="1217.5" y="160" width="4" height="4" fill="#fff" stroke="#777" stroke-width=".8"/><path d="M1210.5 153v6M1228.5 153v6" stroke="#999" stroke-dasharray="1 1.500"/><path d="M1410 100v13M1407 103l3-3.500 3 3.500M1407 110.5l3 3.500 3-3.500" stroke="#41719c" stroke-width="1.500" fill="none"/><rect x="1408.5" y="105" width="3" height="3.500" fill="#fff" stroke="#777" stroke-width=".8"/><rect x="1419.5" y="97.5" width="5" height="18" fill="#fff" stroke="#7f7f7f"/><path d="M1410 116.5h9M1410 97.5h9" stroke="#999" stroke-width="1" stroke-dasharray="1 1.500"/><rect x="1406.0" y="138.5" width="18" height="5" fill="#fff" stroke="#7f7f7f"/><path d="M1406.5 153h17M1410.0 150l-3.500 3 3.500 3M1420.0 150l3.500 3-3.500 3" stroke="#41719c" stroke-width="1.500" fill="none"/><rect x="1413.0" y="151" width="4" height="4" fill="#fff" stroke="#777" stroke-width=".8"/><path d="M1406.0 144v6M1424.0 144v6" stroke="#999" stroke-dasharray="1 1.500"/></svg>
<span class="t" style="left:1429.50px;top:101.00px;font-size:15px;color:#262626;letter-spacing:-0.087px;">Height:</span>
<span class="t" style="left:1429.50px;top:140.00px;font-size:15px;color:#262626;letter-spacing:-0.102px;">Width:</span>
<div class="r" style="left:1484px;top:94px;width:92px;height:29px;background:#fff;border:1px solid #ababab;"></div><span class="t" style="left:1488.00px;top:101.00px;font-size:15px;color:#262626;letter-spacing:-0.559px;">6.85 cm</span><svg class="r" style="left:1559.5px;top:94px;width:10px;height:29px" viewBox="-5 0 10 29" fill="none" stroke="#444" stroke-width="1.2"><path d="M-3 9.5l3-3.300 3 3.300M-3 19.5l3 3.300 3-3.300"/></svg>
<div class="r" style="left:1484px;top:133px;width:92px;height:29px;background:#fff;border:1px solid #ababab;"></div><span class="t" style="left:1488.00px;top:140.00px;font-size:15px;color:#262626;letter-spacing:-0.559px;">5.08 cm</span><svg class="r" style="left:1559.5px;top:133px;width:10px;height:29px" viewBox="-5 0 10 29" fill="none" stroke="#444" stroke-width="1.2"><path d="M-3 9.5l3-3.300 3 3.300M-3 19.5l3 3.300 3-3.300"/></svg>
<span class="t" style="left:1464.87px;top:179.00px;font-size:13.5px;color:#444;letter-spacing:-1.200px;">Size</span>
<svg class="r" style="left:1570px;top:179px;width:12px;height:12px" viewBox="1570 179 12 12" fill="none" stroke="#555" stroke-width="1.1"><path d="M1571.500 188v-7.500h7.500M1575 184l5.500 5.500M1581 185.500v4.500h-4.500"/></svg>
<svg class="r" style="left:1896px;top:181px;width:14px;height:10px" viewBox="1896 181 14 10" fill="none" stroke="#444" stroke-width="1.300"><path d="M1897.500 189l5.500-5.500 5.500 5.500"/></svg>
<!-- p3 -->
<div class="r" style="left:0px;top:196px;width:1920px;height:54px;background:#e6e6e6;"></div>
<div class="r" style="left:6px;top:208px;width:127px;height:30px;background:#fff;border:1px solid #c8c8c8;"></div>
<span class="t" style="left:12.00px;top:216.00px;font-size:15.5px;color:#444;letter-spacing:0.225px;">Zone</span>
<svg class="r" style="left:115px;top:220px;width:10px;height:6px" viewBox="0 0 10 6"><path d="M1.500 1h7l-3.500 4z" fill="#666"/></svg>
<div class="r" style="left:150px;top:216px;width:3px;height:2.5px;background:#b0b0b0;"></div>
<div class="r" style="left:150px;top:221.5px;width:3px;height:2.5px;background:#b0b0b0;"></div>
<div class="r" style="left:150px;top:227px;width:3px;height:2.5px;background:#b0b0b0;"></div>
<div class="r" style="left:170px;top:208px;width:137px;height:30px;background:#fff;border:1px solid #c8c8c8;"></div>
<svg class="r" style="left:170px;top:208px;width:137px;height:30px" viewBox="170 208 137 30" fill="none" stroke="#bdbdbd" stroke-width="1.600"><path d="M186 217l12 12m0-12l-12 12"/><path d="M231 224.500l4 4.500 9-11" stroke-width="2.200"/></svg>
<span class="t" style="left:274.00px;top:213.00px;font-size:20px;color:#444;font-style:italic;font-family:'Liberation Serif',serif;">f</span>
<span class="t" style="left:281.00px;top:217.00px;font-size:15px;color:#444;font-style:italic;font-family:'Liberation Serif',serif;">x</span>
<div class="r" style="left:310px;top:208px;width:1604px;height:30px;background:#fff;border:1px solid #c8c8c8;"></div>
<svg class="r" style="left:1897px;top:219px;width:12px;height:8px" viewBox="0 0 12 8" fill="none" stroke="#bdbdbd" stroke-width="2"><path d="M1.500 1.500l4.500 4.500 4.500-4.500"/></svg>
<div class="r" style="left:0px;top:250px;width:1539px;height:24px;background:#e6e6e6;"></div>
<div class="r" style="left:0px;top:273px;width:1539px;height:1px;background:#9b9b9b;"></div>
<div class="r" style="left:34px;top:274px;width:1505px;height:687px;background:#fff;"></div>
<div class="r" style="left:0px;top:274px;width:33px;height:687px;background:#e6e6e6;"></div>
<div class="r" style="left:33px;top:250px;width:1px;height:711px;background:#9b9b9b;"></div>
<svg class="r" style="left:12px;top:253px;width:20px;height:20px" viewBox="12 253 20 20"><path d="M30 254.600v15.400h-15.500z" fill="#b7b7b7"/></svg>
<svg class="r" style="left:0;top:250px;width:1539px;height:711px" viewBox="0 250 1539 711" shape-rendering="crispEdges"><path d="M146.5 250V273" stroke="#b4b4b4" stroke-width="1"/><path d="M283.5 250V273" stroke="#b4b4b4" stroke-width="1"/><path d="M363.5 250V273" stroke="#b4b4b4" stroke-width="1"/><path d="M443.5 250V273" stroke="#b4b4b4" stroke-width="1"/><path d="M523.5 250V273" stroke="#b4b4b4" stroke-width="1"/><path d="M603.5 250V273" stroke="#b4b4b4" stroke-width="1"/><path d="M683.5 250V273" stroke="#b4b4b4" stroke-width="1"/><path d="M763.5 250V273" stroke="#b4b4b4" stroke-width="1"/><path d="M843.5 250V273" stroke="#b4b4b4" stroke-width="1"/><path d="M923.5 250V273" stroke="#b4b4b4" stroke-width="1"/><path d="M1003.5 250V273" stroke="#b4b4b4" stroke-width="1"/><path d="M1083.5 250V273" stroke="#b4b4b4" stroke-width="1"/><path d="M1163.5 250V273" stroke="#b4b4b4" stroke-width="1"/><path d="M1243.5 250V273" stroke="#b4b4b4" stroke-width="1"/><path d="M1323.5 250V273" stroke="#b4b4b4" stroke-width="1"/><path d="M1403.5 250V273" stroke="#b4b4b4" stroke-width="1"/><path d="M1483.5 250V273" stroke="#b4b4b4" stroke-width="1"/><path d="M146.5 274V961M283.5 274V961M363.5 274V961M443.5 274V961M523.5 274V961M603.5 274V961M683.5 274V961M763.5 274V961M843.5 274V961M923.5 274V961M1003.5 274V961M1083.5 274V961M1163.5 274V961M1243.5 274V961M1323.5 274V961M1403.5 274V961M1483.5 274V961M34 297.5H1539M34 321.5H1539M34 345.5H1539M34 369.5H1539M34 393.5H1539M34 417.5H1539M34 441.5H1539M34 465.5H1539M34 489.5H1539M34 513.5H1539M34 537.5H1539M34 561.5H1539M34 585.5H1539M34 609.5H1539M34 633.5H1539M34 657.5H1539M34 681.5H1539M34 705.5H1539M34 729.5H1539M34 753.5H1539M34 777.5H1539M34 801.5H1539M34 825.5H1539M34 849.5H1539M34 873.5H1539M34 897.5H1539M34 921.5H1539M34 945.5H1539" stroke="#d6d6d6" stroke-width="1" fill="none"/><path d="M0 297.5H33M0 321.5H33M0 345.5H33M0 369.5H33M0 393.5H33M0 417.5H33M0 441.5H33M0 465.5H33M0 489.5H33M0 513.5H33M0 537.5H33M0 561.5H33M0 585.5H33M0 609.5H33M0 633.5H33M0 657.5H33M0 681.5H33M0 705.5H33M0 729.5H33M0 753.5H33M0 777.5H33M0 801.5H33M0 825.5H33M0 849.5H33M0 873.5H33M0 897.5H33M0 921.5H33M0 945.5H33" stroke="#b0b0b0" stroke-width="1" fill="none"/></svg>
<span class="t" style="left:84.33px;top:254.00px;font-size:17px;color:#262626;">A</span>
<span class="t" style="left:209.33px;top:254.00px;font-size:17px;color:#262626;">B</span>
<span class="t" style="left:317.36px;top:254.00px;font-size:17px;color:#262626;">C</span>
<span class="t" style="left:397.36px;top:254.00px;font-size:17px;color:#262626;">D</span>
<span class="t" style="left:477.83px;top:254.00px;font-size:17px;color:#262626;">E</span>
<span class="t" style="left:558.31px;top:254.00px;font-size:17px;color:#262626;">F</span>
<span class="t" style="left:636.89px;top:254.00px;font-size:17px;color:#262626;">G</span>
<span class="t" style="left:717.36px;top:254.00px;font-size:17px;color:#262626;">H</span>
<span class="t" style="left:801.14px;top:254.00px;font-size:17px;color:#262626;">I</span>
<span class="t" style="left:879.25px;top:254.00px;font-size:17px;color:#262626;">J</span>
<span class="t" style="left:957.83px;top:254.00px;font-size:17px;color:#262626;">K</span>
<span class="t" style="left:1038.77px;top:254.00px;font-size:17px;color:#262626;">L</span>
<span class="t" style="left:1116.42px;top:254.00px;font-size:17px;color:#262626;">M</span>
<span class="t" style="left:1197.36px;top:254.00px;font-size:17px;color:#262626;">N</span>
<span class="t" style="left:1276.89px;top:254.00px;font-size:17px;color:#262626;">O</span>
<span class="t" style="left:1357.83px;top:254.00px;font-size:17px;color:#262626;">P</span>
<span class="t" style="left:1436.89px;top:254.00px;font-size:17px;color:#262626;">Q</span>
<span class="t" style="left:1517.36px;top:254.00px;font-size:17px;color:#262626;">R</span>
<span class="t" style="left:12.05px;top:279.00px;font-size:16px;color:#262626;">1</span>
<span class="t" style="left:12.05px;top:303.00px;font-size:16px;color:#262626;">2</span>
<span class="t" style="left:12.05px;top:327.00px;font-size:16px;color:#262626;">3</span>
<span class="t" style="left:12.05px;top:351.00px;font-size:16px;color:#262626;">4</span>
<span class="t" style="left:12.05px;top:375.00px;font-size:16px;color:#262626;">5</span>
<span class="t" style="left:12.05px;top:399.00px;font-size:16px;color:#262626;">6</span>
<span class="t" style="left:12.05px;top:423.00px;font-size:16px;color:#262626;">7</span>
<span class="t" style="left:12.05px;top:447.00px;font-size:16px;color:#262626;">8</span>
<span class="t" style="left:12.05px;top:471.00px;font-size:16px;color:#262626;">9</span>
<span class="t" style="left:7.25px;top:495.00px;font-size:16px;color:#262626;letter-spacing:0.705px;">10</span>
<span class="t" style="left:7.25px;top:519.00px;font-size:16px;color:#262626;letter-spacing:1.892px;">11</span>
<span class="t" style="left:7.25px;top:543.00px;font-size:16px;color:#262626;letter-spacing:0.705px;">12</span>
<span class="t" style="left:7.25px;top:567.00px;font-size:16px;color:#262626;letter-spacing:0.705px;">13</span>
<span class="t" style="left:7.25px;top:591.00px;font-size:16px;color:#262626;letter-spacing:0.705px;">14</span>
<span class="t" style="left:7.25px;top:615.00px;font-size:16px;color:#262626;letter-spacing:0.705px;">15</span>
<span class="t" style="left:7.25px;top:639.00px;font-size:16px;color:#262626;letter-spacing:0.705px;">16</span>
<span class="t" style="left:7.25px;top:663.00px;font-size:16px;color:#262626;letter-spacing:0.705px;">17</span>
<span class="t" style="left:7.25px;top:687.00px;font-size:16px;color:#262626;letter-spacing:0.705px;">18</span>
<span class="t" style="left:7.25px;top:711.00px;font-size:16px;color:#262626;letter-spacing:0.705px;">19</span>
<span class="t" style="left:7.25px;top:735.00px;font-size:16px;color:#262626;letter-spacing:0.705px;">20</span>
<span class="t" style="left:7.25px;top:759.00px;font-size:16px;color:#262626;letter-spacing:0.705px;">21</span>
<span class="t" style="left:7.25px;top:783.00px;font-size:16px;color:#262626;letter-spacing:0.705px;">22</span>
<span class="t" style="left:7.25px;top:807.00px;font-size:16px;color:#262626;letter-spacing:0.705px;">23</span>
<span class="t" style="left:7.25px;top:831.00px;font-size:16px;color:#262626;letter-spacing:0.705px;">24</span>
<span class="t" style="left:7.25px;top:855.00px;font-size:16px;color:#262626;letter-spacing:0.705px;">25</span>
<span class="t" style="left:7.25px;top:879.00px;font-size:16px;color:#262626;letter-spacing:0.705px;">26</span>
<span class="t" style="left:7.25px;top:903.00px;font-size:16px;color:#262626;letter-spacing:0.705px;">27</span>
<span class="t" style="left:7.25px;top:927.00px;font-size:16px;color:#262626;letter-spacing:0.705px;">28</span>
<div class="r" style="left:0;top:946px;width:33px;height:15px;overflow:hidden"><span class="t" style="left:7.25px;top:5.00px;font-size:16px;color:#262626;letter-spacing:0.705px;">29</span></div>
<div class="r" style="left:34px;top:274px;width:250px;height:48px;background:#d9e1f2;"></div>
<div class="r" style="left:34px;top:346px;width:250px;height:24px;background:#d9e1f2;"></div>
<div class="r" style="left:34px;top:442px;width:250px;height:24px;background:#d9e1f2;"></div>
<div class="r" style="left:34px;top:370px;width:250px;height:71px;background:#fff;"></div>
<div class="r" style="left:34px;top:441px;width:250px;height:1px;background:#8ea9db;"></div>
<div class="r" style="left:34px;top:321px;width:250px;height:1px;background:#9ab3e0;"></div>
<div class="r" style="left:34px;top:369px;width:250px;height:1px;background:#8ea9db;"></div>
<div class="r" style="left:34px;top:393px;width:250px;height:1px;background:#9ab3e0;"></div>
<span class="t" style="left:37.50px;top:279.00px;font-size:16px;color:#000;letter-spacing:0.007px;">Sales Month</span>
<span class="t" style="left:150.50px;top:279.00px;font-size:16px;color:#000;letter-spacing:-0.234px;">(All)</span>
<span class="t" style="left:37.50px;top:303.00px;font-size:16px;color:#000;letter-spacing:0.052px;">Products</span>
<span class="t" style="left:150.50px;top:303.00px;font-size:16px;color:#000;letter-spacing:-0.234px;">(All)</span>
<div class="r" style="left:262.5px;top:275.5px;width:20px;height:20px;background:#fff;border:1px solid #b5b5b5;"></div>
<svg class="r" style="left:268px;top:283.5px;width:10px;height:6px" viewBox="0 0 10 6"><path d="M1 .5h7.500l-3.750 4.500z" fill="#555"/></svg>
<div class="r" style="left:262.5px;top:299.5px;width:20px;height:20px;background:#fff;border:1px solid #b5b5b5;"></div>
<svg class="r" style="left:268px;top:307.5px;width:10px;height:6px" viewBox="0 0 10 6"><path d="M1 .5h7.500l-3.750 4.500z" fill="#555"/></svg>
<span class="t" style="left:37.50px;top:351.00px;font-size:16px;color:#000;letter-spacing:-0.656px;font-weight:bold;">Row Labels</span>
<div class="r" style="left:125.5px;top:347.5px;width:20px;height:20px;background:#fff;border:1px solid #b5b5b5;"></div>
<svg class="r" style="left:126px;top:348px;width:20px;height:20px" viewBox="0 0 20 20"><path d="M6.500 4.500h10l-4 4.500v6h-2v-6z" fill="#555"/><path d="M3 12h4.500l-2.250 2.500z" fill="#555"/></svg>
<span class="t" style="left:150.50px;top:351.00px;font-size:16px;color:#000;letter-spacing:-0.313px;font-weight:bold;">Sum of Net Sales</span>
<div class="r" style="left:41px;top:377.5px;width:11px;height:11px;background:#fff;border:1px solid #9a9a9a;border-radius:2px;"></div>
<div class="r" style="left:43.5px;top:382.5px;width:6px;height:1.2px;background:#555;"></div>
<span class="t" style="left:55.50px;top:375.00px;font-size:16px;color:#000;letter-spacing:-0.039px;font-weight:bold;">North</span>
<span class="t" style="left:217.50px;top:375.00px;font-size:16px;color:#000;letter-spacing:-0.130px;font-weight:bold;">1005751</span>
<span class="t" style="left:73.50px;top:399.00px;font-size:16px;color:#000;letter-spacing:-0.363px;">2015</span>
<span class="t" style="left:226.50px;top:399.00px;font-size:16px;color:#000;letter-spacing:0.061px;">112847</span>
<span class="t" style="left:73.50px;top:423.00px;font-size:16px;color:#000;letter-spacing:-0.363px;">2016</span>
<span class="t" style="left:226.50px;top:423.00px;font-size:16px;color:#000;letter-spacing:-0.177px;">892904</span>
<span class="t" style="left:37.50px;top:447.00px;font-size:16px;color:#000;letter-spacing:-0.159px;font-weight:bold;">Grand Total</span>
<span class="t" style="left:217.50px;top:447.00px;font-size:16px;color:#000;letter-spacing:-0.130px;font-weight:bold;">1005751</span>
<div class="r" style="left:1538px;top:274px;width:1px;height:687px;background:#a6a6a6;"></div>
<div class="r" style="left:1539px;top:250px;width:26px;height:712px;background:#e6e6e6;"></div>
<div class="r" style="left:1542px;top:252px;width:19px;height:19px;background:#fff;border:1px solid #ababab;"></div>
<svg class="r" style="left:1546px;top:258px;width:12px;height:8px" viewBox="0 0 12 8"><path d="M1 6.500h9.500l-4.750-5.500z" fill="#000"/></svg>
<div class="r" style="left:1542px;top:271px;width:19px;height:648px;background:#fff;border:1px solid #ababab;"></div>
<div class="r" style="left:1542px;top:919px;width:19px;height:24px;background:#f0f0f0;"></div>
<div class="r" style="left:1542px;top:943px;width:19px;height:19px;background:#fff;border:1px solid #ababab;"></div>
<svg class="r" style="left:1546px;top:949px;width:12px;height:8px" viewBox="0 0 12 8"><path d="M1 1.500h9.500l-4.750 5.500z" fill="#000"/></svg>
<!-- p4 -->
<div class="r" style="left:344px;top:305px;width:695px;height:433px;background:#fff;border:1px solid #d9d9d9;"></div>
<div class="r" style="left:351px;top:315px;width:99px;height:22px;background:linear-gradient(#e4e4e4,#dadada 45%,#c3c3c3);"></div>
<span class="t" style="left:355.50px;top:320.00px;font-size:13.5px;color:#1a1a1a;letter-spacing:-0.554px;">Sales Month</span>
<svg class="r" style="left:434.5px;top:324.5px;width:9px;height:5px" viewBox="0 0 9 5"><path d="M0 0h9l-4.5 5z" fill="#3a3a3a"/></svg>
<div class="r" style="left:451px;top:315px;width:77px;height:22px;background:linear-gradient(#e4e4e4,#dadada 45%,#c3c3c3);"></div>
<span class="t" style="left:455.00px;top:320.00px;font-size:13.5px;color:#1a1a1a;letter-spacing:-0.539px;">Products</span>
<svg class="r" style="left:513.0px;top:324.5px;width:9px;height:5px" viewBox="0 0 9 5"><path d="M0 0h9l-4.5 5z" fill="#3a3a3a"/></svg>
<div class="r" style="left:357px;top:347px;width:111px;height:22px;background:linear-gradient(#e4e4e4,#dadada 45%,#c3c3c3);"></div>
<span class="t" style="left:361.00px;top:352.00px;font-size:13.5px;color:#1a1a1a;letter-spacing:-0.236px;">Sum of Net Sales</span>
<span class="t" style="left:668.10px;top:387.00px;font-size:21px;color:#595959;letter-spacing:-0.089px;">Total</span>
<svg class="r" style="left:344px;top:305px;width:695px;height:433px" viewBox="344 305 695 433" shape-rendering="crispEdges"><path d="M421 432.5H950M421 452.5H950M421 473.5H950M421 493.5H950M421 514.5H950M421 534.5H950M421 555.5H950M421 575.5H950M421 596.5H950M421 616.5H950M421 637.5H950" stroke="#d9d9d9" stroke-width="1" fill="none"/><path d="M421.500 637V695M949.500 637V695" stroke="#d9d9d9" stroke-width="1" fill="none"/><rect x="513" y="614" width="82" height="23" fill="#4472c4"/><rect x="776" y="454" width="83" height="183" fill="#4472c4"/><rect x="976" y="555" width="8.500" height="8.500" fill="#4472c4"/></svg>
<span class="t" style="left:355.30px;top:425.00px;font-size:13px;color:#595959;letter-spacing:0.399px;">1000000</span>
<span class="t" style="left:362.80px;top:446.00px;font-size:13px;color:#595959;letter-spacing:0.425px;">900000</span>
<span class="t" style="left:362.80px;top:466.00px;font-size:13px;color:#595959;letter-spacing:0.425px;">800000</span>
<span class="t" style="left:362.80px;top:487.00px;font-size:13px;color:#595959;letter-spacing:0.425px;">700000</span>
<span class="t" style="left:362.80px;top:507.00px;font-size:13px;color:#595959;letter-spacing:0.425px;">600000</span>
<span class="t" style="left:362.80px;top:528.00px;font-size:13px;color:#595959;letter-spacing:0.425px;">500000</span>
<span class="t" style="left:362.80px;top:548.00px;font-size:13px;color:#595959;letter-spacing:0.425px;">400000</span>
<span class="t" style="left:362.80px;top:569.00px;font-size:13px;color:#595959;letter-spacing:0.425px;">300000</span>
<span class="t" style="left:362.80px;top:589.00px;font-size:13px;color:#595959;letter-spacing:0.425px;">200000</span>
<span class="t" style="left:362.80px;top:610.00px;font-size:13px;color:#595959;letter-spacing:0.425px;">100000</span>
<span class="t" style="left:401.07px;top:630.00px;font-size:13px;color:#595959;">0</span>
<span class="t" style="left:539.00px;top:650.00px;font-size:13.5px;color:#595959;letter-spacing:-0.010px;">2015</span>
<span class="t" style="left:802.50px;top:650.00px;font-size:13.5px;color:#595959;letter-spacing:-0.010px;">2016</span>
<span class="t" style="left:668.05px;top:679.00px;font-size:13.5px;color:#595959;letter-spacing:0.623px;">North</span>
<span class="t" style="left:988.00px;top:553.00px;font-size:13.5px;color:#595959;letter-spacing:0.246px;">Total</span>
<div class="r" style="left:357px;top:704px;width:69px;height:22px;background:linear-gradient(#e4e4e4,#dadada 45%,#c3c3c3);"></div>
<span class="t" style="left:361.00px;top:709.00px;font-size:13.5px;color:#1a1a1a;letter-spacing:-0.922px;">Zone</span>
<svg class="r" style="left:398px;top:708px;width:24px;height:16px" viewBox="398 708 24 16"><path d="M404 709.500h16l-6.500 6.500v7h-3v-7z" fill="#8a8a8a"/><path d="M399.500 716.500h7l-3.500 4z" fill="#3a3a3a"/></svg>
<div class="r" style="left:427px;top:704px;width:109px;height:22px;background:linear-gradient(#e4e4e4,#dadada 45%,#c3c3c3);"></div>
<span class="t" style="left:431.50px;top:709.00px;font-size:13.5px;color:#1a1a1a;letter-spacing:-0.370px;">Financial Year</span>
<svg class="r" style="left:520.5px;top:714.0px;width:9px;height:5px" viewBox="0 0 9 5"><path d="M0 0h9l-4.5 5z" fill="#3a3a3a"/></svg>
<div class="r" style="left:985px;top:704px;width:18px;height:22px;background:linear-gradient(#e4e4e4,#dadada 45%,#c3c3c3);"></div>
<div class="r" style="left:1005px;top:704px;width:19px;height:22px;background:linear-gradient(#e4e4e4,#dadada 45%,#c3c3c3);"></div>
<svg class="r" style="left:985px;top:704px;width:40px;height:22px" viewBox="985 704 40 22" fill="none" stroke="#6a6a6a" stroke-width="1.500"><path d="M989.500 715h9M994 710.500v9M1010 715h8.500"/></svg>
<!-- p5 -->
<div class="r" style="left:1137px;top:319px;width:240px;height:324px;background:#fff;border:1px solid #4472c4;"></div>
<div class="r" style="left:1138px;top:320px;width:241px;height:324px;border:1px solid #5a5a5a;"></div>
<span class="t" style="left:1148.00px;top:329.00px;font-size:15px;color:#000;letter-spacing:0.724px;font-weight:bold;">Zone</span>
<div class="r" style="left:1148px;top:352px;width:218px;height:1px;background:#4472c4;"></div>
<div class="r" style="left:1148px;top:358px;width:218px;height:31px;background:#fff;border:1px solid #c8c8c8;border-radius:3px;"></div>
<span class="t" style="left:1159.50px;top:366.00px;font-size:16px;color:#000;letter-spacing:-0.005px;">East</span>
<div class="r" style="left:1148px;top:393px;width:218px;height:31px;background:#b4c6e7;border:1px solid #8f9aae;border-radius:3px;"></div>
<span class="t" style="left:1159.50px;top:401.00px;font-size:16px;color:#000;letter-spacing:0.719px;">North</span>
<div class="r" style="left:1148px;top:428px;width:218px;height:31px;background:#fff;border:1px solid #c8c8c8;border-radius:3px;"></div>
<span class="t" style="left:1159.50px;top:436.00px;font-size:16px;color:#000;letter-spacing:-0.078px;">South</span>
<div class="r" style="left:1148px;top:463px;width:218px;height:31px;background:#fff;border:1px solid #c8c8c8;border-radius:3px;"></div>
<span class="t" style="left:1159.50px;top:471.00px;font-size:16px;color:#000;letter-spacing:0.282px;">West</span>
<svg class="r" style="left:1300px;top:322px;width:70px;height:26px" viewBox="1300 322 70 26" fill="none"><path d="M1312 328.400h10M1312 334.500h10M1312 340.500h10" stroke="#6e6e6e" stroke-width="1.100"/><path d="M1304.300 329l2.200 2.300 4.200-4.900M1304.300 335.100l2.200 2.300 4.200-4.900M1304.300 341.200l2.200 2.300 4.200-4.900" stroke="#6e6e6e" stroke-width="1.100"/><path d="M1343 326.200h14l-5.800 6h-2.800z" fill="#707070"/><path d="M1348.600 331.500v7h2.200v-7" stroke="#707070" stroke-width="1" fill="#fff"/><path d="M1344.800 327l4.300 4.600" stroke="#fff" stroke-width=".8"/><path d="M1352.300 336.500l8.500 8m0-8l-8.500 8" stroke="#d8431f" stroke-width="2.100"/></svg>
<svg class="r" style="left:1125px;top:310px;width:265px;height:345px" viewBox="1125 310 265 345"><circle cx="1138.9" cy="320.9" r="5.600" fill="#fff" stroke="#595959" stroke-width="2.500"/><circle cx="1258.9" cy="320.9" r="5.600" fill="#fff" stroke="#595959" stroke-width="2.500"/><circle cx="1378.9" cy="320.9" r="5.600" fill="#fff" stroke="#595959" stroke-width="2.500"/><circle cx="1138.9" cy="482.5" r="5.600" fill="#fff" stroke="#595959" stroke-width="2.500"/><circle cx="1378.9" cy="482.5" r="5.600" fill="#fff" stroke="#595959" stroke-width="2.500"/><circle cx="1138.9" cy="644" r="5.600" fill="#fff" stroke="#595959" stroke-width="2.500"/><circle cx="1258.9" cy="644" r="5.600" fill="#fff" stroke="#595959" stroke-width="2.500"/><circle cx="1378.9" cy="644" r="5.600" fill="#fff" stroke="#595959" stroke-width="2.500"/></svg>
<!-- p6 -->
<div class="r" style="left:1565px;top:250px;width:355px;height:743px;background:#e6e6e6;"></div>
<div class="r" style="left:1564px;top:250px;width:1px;height:743px;background:#b9b9b9;"></div>
<span class="t" style="left:1580.30px;top:267.00px;font-size:26.5px;color:#2b2b2b;letter-spacing:-0.687px;-webkit-text-stroke:0.45px #e6e6e6;">Format Slicer</span>
<svg class="r" style="left:1828px;top:268px;width:76px;height:20px" viewBox="1828 268 76 20" fill="none" stroke="#333" stroke-width="1.400"><path d="M1832 273.500l8.500 8.500 8.500-8.500"/><path d="M1885.500 271.500l12.500 12.500m0-12.500l-12.500 12.500"/></svg>
<div class="r" style="left:1582px;top:307px;width:38px;height:38px;background:#c6c6c6;"></div>
<svg class="r" style="left:1582px;top:307px;width:38px;height:38px" viewBox="1582 307 38 38" fill="none"><rect x="1595" y="320" width="19" height="19" rx="1.600" fill="#217346"/><path d="M1596 315.400h18M1596.300 313v5M1613.700 313v5" stroke="#217346" stroke-width="1.300"/><path d="M1590.400 321.200v17.500M1588 321.400h5M1588 338.500h5" stroke="#217346" stroke-width="1.300"/><path d="M1599 329.500h11M1604.500 324v11" stroke="#fff" stroke-width="1.200"/><path d="M1604.500 322.200l-2.200 2.800h4.400zM1604.500 336.800l-2.200-2.800h4.400zM1597.200 329.500l2.800-2.200v4.400zM1611.800 329.500l-2.800-2.200v4.400z" fill="#fff"/></svg>
<svg class="r" style="left:1579px;top:352px;width:327px;height:13px" viewBox="1579 352 327 13" fill="none" stroke="#c0c0c0" stroke-width="1"><path d="M1579 363.500h11.800l8.100-10.300 8.400 10.300H1905"/></svg>
<div class="r" style="left:1583px;top:371px;width:297px;height:22px;background:#d2d2d2;border:1px solid #a0a0a0;"></div>
<svg class="r" style="left:1587px;top:378px;width:14px;height:10px" viewBox="-2 -2 14 10" fill="none" stroke="#333" stroke-width="1.400"><path d="M0 0l5 5 5-5"/></svg>
<span class="t" style="left:1608.30px;top:375.00px;font-size:15px;color:#1e1e1e;letter-spacing:-0.296px;font-weight:bold;">Position and Layout</span>
<span class="t" style="left:1607.50px;top:403.00px;font-size:15px;color:#333;letter-spacing:-0.337px;">Position</span>
<span class="t" style="left:1619.50px;top:434.00px;font-size:15px;color:#333;letter-spacing:0.131px;"><u>H</u>orizontal:</span>
<span class="t" style="left:1619.50px;top:469.00px;font-size:15px;color:#333;letter-spacing:-0.107px;"><u>V</u>ertical:</span>
<div class="r" style="left:1779px;top:427px;width:101px;height:28px;background:#fff;border:1px solid #c6c6c6;"></div><span class="t" style="left:1787.50px;top:433.00px;font-size:15px;color:#262626;letter-spacing:-0.456px;">23.37 cm</span><svg class="r" style="left:1862.5px;top:427px;width:10px;height:28px" viewBox="-5 0 10 28" fill="none" stroke="#444" stroke-width="1.2"><path d="M-3 9.0l3-3.300 3 3.300M-3 19.0l3 3.300 3-3.300"/></svg>
<div class="r" style="left:1779px;top:462px;width:101px;height:28px;background:#fff;border:1px solid #c6c6c6;"></div><span class="t" style="left:1787.50px;top:468.00px;font-size:15px;color:#262626;letter-spacing:-0.476px;">0.97 cm</span><svg class="r" style="left:1862.5px;top:462px;width:10px;height:28px" viewBox="-5 0 10 28" fill="none" stroke="#444" stroke-width="1.2"><path d="M-3 9.0l3-3.300 3 3.300M-3 19.0l3 3.300 3-3.300"/></svg>
<div class="r" style="left:1619.5px;top:500.5px;width:15px;height:15px;background:#fff;border:1px solid #6e6e6e;"></div>
<span class="t" style="left:1642.00px;top:500.00px;font-size:15px;color:#333;letter-spacing:-0.042px;">Disab<u>l</u>e resizing and moving</span>
<span class="t" style="left:1607.50px;top:532.00px;font-size:15px;color:#333;letter-spacing:-0.307px;">Layout</span>
<span class="t" style="left:1619.50px;top:563.00px;font-size:15px;color:#333;letter-spacing:-0.012px;">Number of <u>c</u>olumns:</span>
<span class="t" style="left:1619.50px;top:598.00px;font-size:15px;color:#333;"><u>B</u>utton height:</span>
<span class="t" style="left:1619.50px;top:633.00px;font-size:15px;color:#333;letter-spacing:0.065px;">Button <u>w</u>idth:</span>
<div class="r" style="left:1779px;top:556px;width:101px;height:28px;background:#fff;border:1px solid #c6c6c6;"></div><span class="t" style="left:1788.00px;top:562.00px;font-size:15px;color:#262626;">1</span><svg class="r" style="left:1862.5px;top:556px;width:10px;height:28px" viewBox="-5 0 10 28" fill="none" stroke="#444" stroke-width="1.2"><path d="M-3 9.0l3-3.300 3 3.300M-3 19.0l3 3.300 3-3.300"/></svg>
<div class="r" style="left:1779px;top:591px;width:101px;height:28px;background:#fff;border:1px solid #c6c6c6;"></div><span class="t" style="left:1787.50px;top:597.00px;font-size:15px;color:#262626;letter-spacing:-0.476px;">0.65 cm</span><svg class="r" style="left:1862.5px;top:591px;width:10px;height:28px" viewBox="-5 0 10 28" fill="none" stroke="#444" stroke-width="1.2"><path d="M-3 9.0l3-3.300 3 3.300M-3 19.0l3 3.300 3-3.300"/></svg>
<div class="r" style="left:1779px;top:626px;width:101px;height:28px;background:#fff;border:1px solid #c6c6c6;"></div><span class="t" style="left:1787.50px;top:632.00px;font-size:15px;color:#262626;letter-spacing:-0.502px;">4.6 cm</span><svg class="r" style="left:1862.5px;top:626px;width:10px;height:28px" viewBox="-5 0 10 28" fill="none" stroke="#444" stroke-width="1.2"><path d="M-3 9.0l3-3.300 3 3.300M-3 19.0l3 3.300 3-3.300"/></svg>
<svg class="r" style="left:1587px;top:678.5px;width:14px;height:10px" viewBox="-2 -2 14 10" fill="none" stroke="#333" stroke-width="1.400"><path d="M0 0l5 5 5-5"/></svg>
<span class="t" style="left:1607.50px;top:676.00px;font-size:15px;color:#1e1e1e;letter-spacing:-0.838px;font-weight:bold;">Size</span>
<span class="t" style="left:1607.50px;top:708.00px;font-size:15px;color:#333;letter-spacing:0.229px;">H<u>e</u>ight</span>
<span class="t" style="left:1607.50px;top:743.00px;font-size:15px;color:#333;letter-spacing:0.165px;">Wi<u>d</u>th</span>
<span class="t" style="left:1607.50px;top:778.00px;font-size:15px;color:#333;letter-spacing:0.091px;">Ro<u>t</u>ation</span>
<span class="t" style="left:1607.50px;top:813.00px;font-size:15px;color:#333;letter-spacing:-0.140px;">Scale <u>H</u>eight</span>
<span class="t" style="left:1607.50px;top:848.00px;font-size:15px;color:#333;letter-spacing:-0.203px;">Scale <u>W</u>idth</span>
<div class="r" style="left:1779px;top:701px;width:101px;height:28px;background:#fff;border:1px solid #c6c6c6;"></div><span class="t" style="left:1787.50px;top:707.00px;font-size:15px;color:#262626;letter-spacing:-0.476px;">6.85 cm</span><svg class="r" style="left:1862.5px;top:701px;width:10px;height:28px" viewBox="-5 0 10 28" fill="none" stroke="#444" stroke-width="1.2"><path d="M-3 9.0l3-3.300 3 3.300M-3 19.0l3 3.300 3-3.300"/></svg>
<div class="r" style="left:1779px;top:736px;width:101px;height:28px;background:#fff;border:1px solid #c6c6c6;"></div><span class="t" style="left:1787.50px;top:742.00px;font-size:15px;color:#262626;letter-spacing:-0.476px;">5.08 cm</span><svg class="r" style="left:1862.5px;top:736px;width:10px;height:28px" viewBox="-5 0 10 28" fill="none" stroke="#444" stroke-width="1.2"><path d="M-3 9.0l3-3.300 3 3.300M-3 19.0l3 3.300 3-3.300"/></svg>
<div class="r" style="left:1779px;top:771px;width:101px;height:28px;background:#efefef;border:1px solid #d2d2d2;"></div><svg class="r" style="left:1862.5px;top:771px;width:10px;height:28px" viewBox="-5 0 10 28" fill="none" stroke="#c4c4c4" stroke-width="1.2"><path d="M-3 9.0l3-3.300 3 3.300M-3 19.0l3 3.300 3-3.300"/></svg>
<div class="r" style="left:1779px;top:806px;width:101px;height:28px;background:#fff;border:1px solid #c6c6c6;"></div><span class="t" style="left:1787.50px;top:812.00px;font-size:15px;color:#262626;letter-spacing:-1.121px;">100%</span><svg class="r" style="left:1862.5px;top:806px;width:10px;height:28px" viewBox="-5 0 10 28" fill="none" stroke="#444" stroke-width="1.2"><path d="M-3 9.0l3-3.300 3 3.300M-3 19.0l3 3.300 3-3.300"/></svg>
<div class="r" style="left:1779px;top:841px;width:101px;height:28px;background:#fff;border:1px solid #c6c6c6;"></div><span class="t" style="left:1787.50px;top:847.00px;font-size:15px;color:#262626;letter-spacing:-1.121px;">100%</span><svg class="r" style="left:1862.5px;top:841px;width:10px;height:28px" viewBox="-5 0 10 28" fill="none" stroke="#444" stroke-width="1.2"><path d="M-3 9.0l3-3.300 3 3.300M-3 19.0l3 3.300 3-3.300"/></svg>
<div class="r" style="left:1607px;top:878.5px;width:16px;height:16px;background:#fff;border:1px solid #6e6e6e;"></div>
<span class="t" style="left:1629.00px;top:879.00px;font-size:15px;color:#333;letter-spacing:-0.118px;">Lock <u>a</u>spect ratio</span>
<div class="r" style="left:1607px;top:910.5px;width:16px;height:16px;background:#ededed;border:1px solid #cdcdcd;"></div>
<span class="t" style="left:1629.00px;top:911.00px;font-size:15px;color:#a8a8a8;letter-spacing:0.034px;"><u>R</u>elative to original picture size</span>
<svg class="r" style="left:1589px;top:954px;width:12px;height:16px" viewBox="1589 954 12 16" fill="none" stroke="#333" stroke-width="1.400"><path d="M1592.500 956.500l5.500 5.500-5.500 5.500"/></svg>
<span class="t" style="left:1608.30px;top:955.00px;font-size:15px;color:#1e1e1e;letter-spacing:-0.299px;font-weight:bold;">Properties</span>
<div class="r" style="left:1886px;top:372px;width:18px;height:18px;background:#fff;border:1px solid #ababab;"></div>
<svg class="r" style="left:1889.500px;top:377px;width:12px;height:8px" viewBox="0 0 12 8"><path d="M1 6.500h9.500l-4.750-5.500z" fill="#000"/></svg>
<div class="r" style="left:1886px;top:389px;width:18px;height:559px;background:#fff;border:1px solid #ababab;"></div>
<div class="r" style="left:1886px;top:952px;width:18px;height:18px;background:#fff;border:1px solid #ababab;"></div>
<svg class="r" style="left:1889.500px;top:957.500px;width:12px;height:8px" viewBox="0 0 12 8"><path d="M1 1.500h9.500l-4.750 5.500z" fill="#000"/></svg>
<svg class="r" style="left:1440px;top:400px;width:170px;height:175px;z-index:50" viewBox="1440 400 170 175"><path d="M1451.800 566.300L1582 427" stroke="#e21b1b" stroke-width="4.400" fill="none"/><path d="M1597 409L1571 418.600L1589 435.500z" fill="#e21b1b"/></svg>
<!-- p7 -->
<div class="r" style="left:0px;top:961px;width:1564px;height:32px;background:#e6e6e6;"></div>
<div class="r" style="left:0px;top:961px;width:1539px;height:1px;background:#9b9b9b;"></div>
<div class="r" style="left:113px;top:961px;width:113px;height:29px;background:#fff;"></div>
<div class="r" style="left:112px;top:988px;width:115px;height:2px;background:#217346;"></div>
<div class="r" style="left:112px;top:962px;width:1px;height:26px;background:#a6a6a6;"></div>
<div class="r" style="left:226px;top:962px;width:1px;height:26px;background:#a6a6a6;"></div>
<span class="t" style="left:124.50px;top:967.00px;font-size:16.5px;color:#217346;letter-spacing:0.271px;font-weight:bold;">Pivot Table</span>
<span class="t" style="left:240.00px;top:967.00px;font-size:16.5px;color:#444;letter-spacing:0.079px;">Source Data</span>
<div class="r" style="left:346px;top:965px;width:1px;height:24px;background:#ababab;"></div>
<svg class="r" style="left:384px;top:967px;width:22px;height:22px" viewBox="0 0 22 22" fill="none" stroke="#555" stroke-width="1.300"><circle cx="11" cy="10.500" r="9.500"/><path d="M11 5.500v10M6 10.500h10" stroke-width="1.500"/></svg>
<svg class="r" style="left:26px;top:970px;width:50px;height:14px" viewBox="26 970 50 14"><path d="M35.500 972.500v9l-5.500-4.500zM61.500 972.500v9l5.500-4.500z" fill="#c2c2c2"/></svg>
<div class="r" style="left:937px;top:970px;width:3px;height:2.5px;background:#b0b0b0;"></div>
<div class="r" style="left:937px;top:975.5px;width:3px;height:2.5px;background:#b0b0b0;"></div>
<div class="r" style="left:937px;top:981px;width:3px;height:2.5px;background:#b0b0b0;"></div>
<div class="r" style="left:957px;top:968px;width:19px;height:19px;background:#fff;border:1px solid #ababab;"></div>
<svg class="r" style="left:962px;top:971.500px;width:8px;height:12px" viewBox="0 0 8 12"><path d="M6.500 1v9.500l-5.500-4.750z" fill="#000"/></svg>
<div class="r" style="left:975px;top:968px;width:467px;height:19px;background:#fff;border:1px solid #ababab;"></div>
<div class="r" style="left:1442px;top:969px;width:79px;height:17px;background:#f0f0f0;"></div>
<div class="r" style="left:1520px;top:968px;width:19px;height:19px;background:#fff;border:1px solid #ababab;"></div>
<svg class="r" style="left:1526px;top:971.500px;width:8px;height:12px" viewBox="0 0 8 12"><path d="M1.500 1v9.500l5.500-4.750z" fill="#000"/></svg>
<div class="r" style="left:0px;top:993px;width:1920px;height:27px;background:#f3f3f3;"></div>
<div class="r" style="left:0px;top:993px;width:1920px;height:1px;background:#d0d0d0;"></div>
<span class="t" style="left:14.00px;top:1001.00px;font-size:13.5px;color:#444;letter-spacing:-0.755px;">Ready</span>
<div class="r" style="left:1547px;top:994px;width:50px;height:26px;background:#c6c6c6;"></div>
<svg class="r" style="left:1560px;top:996px;width:125px;height:22px" viewBox="1560 996 125 22" fill="none" stroke="#5a5a5a" stroke-width="1.100"><rect x="1564.500" y="999.500" width="15" height="15"/><path d="M1564.500 1004.500h15M1564.500 1009.500h15M1569.500 999.500v15M1574.500 999.500v15"/><rect x="1613.500" y="999.500" width="16" height="15"/><rect x="1616.500" y="1002.500" width="10" height="9.500"/><path d="M1618.500 1005h6M1618.500 1007.500h6M1618.500 1010h6" stroke-width=".9"/><path d="M1663.500 999.500h16v15h-16zM1668.500 999.500v8.500h6v-8.500M1663.500 1008h16"/></svg>
<div class="r" style="left:1704.5px;top:1006.5px;width:9px;height:1.3px;background:#444;"></div>
<div class="r" style="left:1720px;top:1006.5px;width:124px;height:1px;background:#6a6a6a;"></div>
<div class="r" style="left:1780.5px;top:999.5px;width:5.5px;height:14.5px;background:#3c3c3c;"></div>
<div class="r" style="left:1850px;top:1006.5px;width:11px;height:1.3px;background:#444;"></div>
<div class="r" style="left:1854.9px;top:1001.5px;width:1.3px;height:11px;background:#444;"></div>
<span class="t" style="left:1877.50px;top:1001.00px;font-size:13.5px;color:#444;letter-spacing:-1.200px;">100%</span>
</body></html>
